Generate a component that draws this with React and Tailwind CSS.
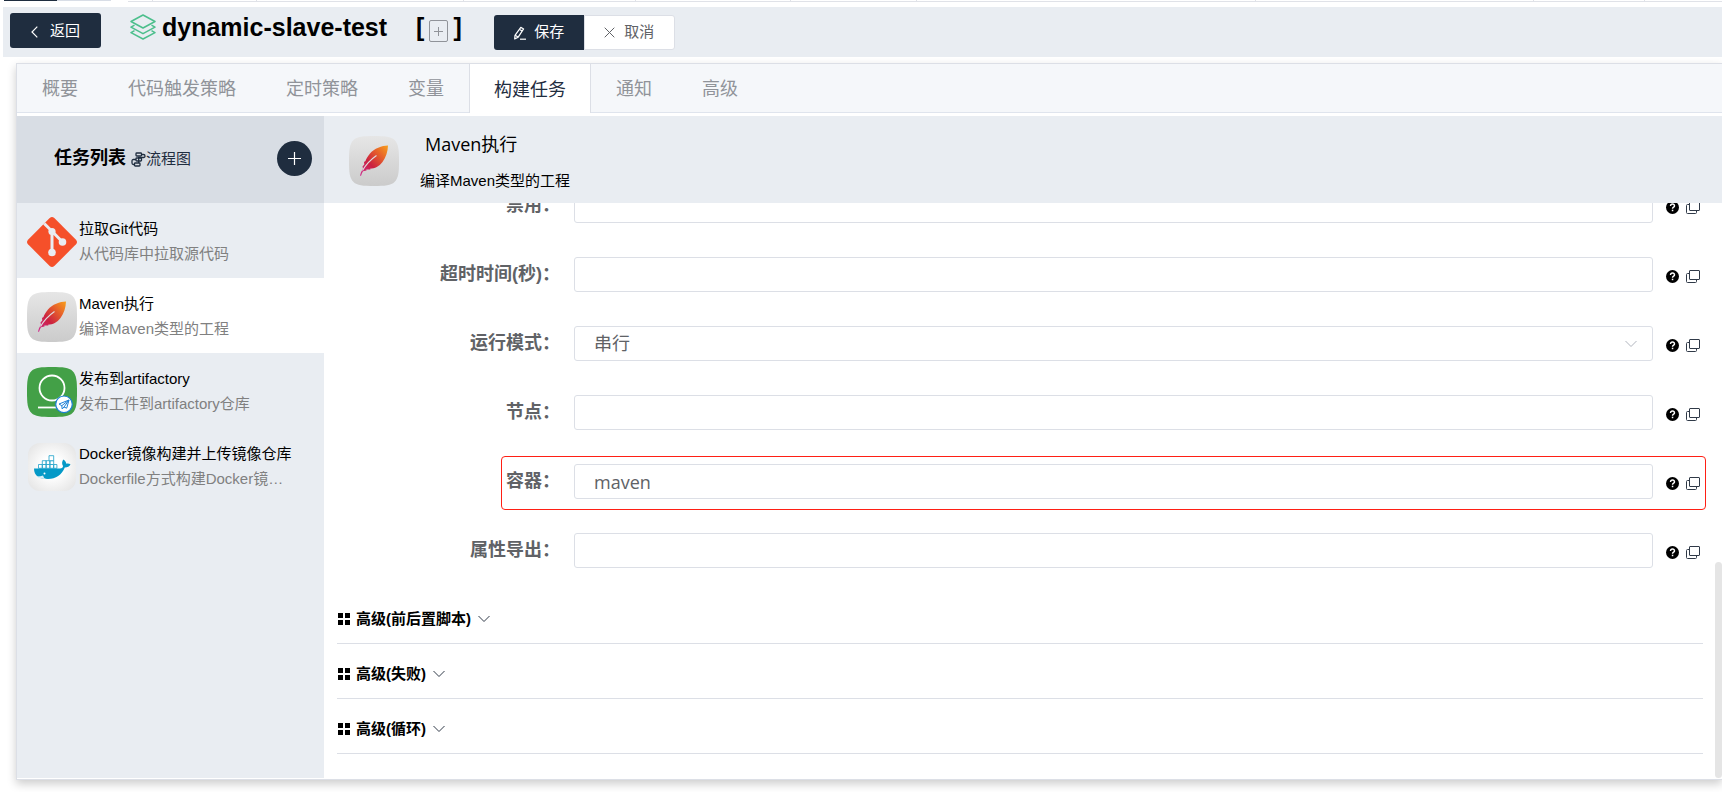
import React from "react";

const TABS = ["概要", "代码触发策略", "定时策略", "变量", "构建任务", "通知", "高级"];
const ACTIVE_TAB = "构建任务";

function LayersIcon() {
  return (
    <svg width="26" height="26" viewBox="0 0 26 26" fill="none" stroke="#4cbf8c" strokeWidth="1.5" strokeLinejoin="round" aria-hidden="true">
      <path d="M13 1 25 7.5 13 14 1 7.5Z" />
      <path d="M4.5 11.2 1 13.2 13 19.7 25 13.2 21.500 11.2" />
      <path d="M4.5 16.700 1 18.700 13 25 25 18.700 21.500 16.700" />
    </svg>
  );
}

function PencilIcon() {
  return (
    <svg width="14" height="14" viewBox="0 0 14 14" fill="none" stroke="currentColor" strokeWidth="1.200" strokeLinejoin="round" aria-hidden="true">
      <path d="M7.800 1.300 10.600 2.900 5.200 11.200 1.700 12.900 2 9.300Z" />
      <path d="M6.600 3.400 9.200 5M2.200 9.300 5 11" />
      <path d="M7 13.200H13" />
    </svg>
  );
}

function CloseIcon() {
  return (
    <svg width="11" height="11" viewBox="0 0 11 11" fill="none" stroke="currentColor" aria-hidden="true">
      <path d="M.7.7 10.300 10.300M10.300.7.7 10.300" />
    </svg>
  );
}

function ChevronDown({ className }) {
  return (
    <svg className={className} width="12" height="8" viewBox="0 0 12 8" fill="none" stroke="currentColor" aria-hidden="true">
      <path d="M.5 1 6 6.500 11.500 1" />
    </svg>
  );
}

function FlowIcon() {
  return (
    <svg width="15" height="15" viewBox="0 0 15 15" fill="none" stroke="currentColor" strokeWidth="1.300" aria-hidden="true">
      <rect x="5" y="1" width="5.500" height="3" rx=".8" />
      <rect x="5" y="6" width="5.500" height="3" rx=".8" />
      <rect x="3.500" y="11" width="5.500" height="3" rx=".8" />
      <path d="M10.500 2.500H12.500Q14 2.500 14 4T12.500 5.500H7.700V11M5 7.500H2.500Q1 7.500 1 9V11Q1 12.500 2.500 12.500H3.500" />
    </svg>
  );
}

function GitIcon() {
  return (
    <svg className="shrink-0" width="50" height="50" viewBox="0 0 50 50" aria-hidden="true">
      <path fill="#f5502a" d="M22.700 1Q25 -1 27.300 1L49 22.700Q51 25 49 27.300L27.300 49Q25 51 22.700 49L1 27.300Q-1 25 1 22.700Z" />
      <path d="M17.200 6.500 25 14.300V35M25 14.300 35.500 25" fill="none" stroke="#e9edf2" strokeWidth="3" />
      <circle cx="25" cy="14.500" r="3.600" fill="#e9edf2" />
      <circle cx="25" cy="35.500" r="3.800" fill="#e9edf2" />
      <circle cx="35.500" cy="25" r="3.800" fill="#e9edf2" />
    </svg>
  );
}

function MavenIcon({ id }) {
  return (
    <svg className="shrink-0" width="50" height="50" viewBox="0 0 50 50" aria-hidden="true">
      <defs>
        <linearGradient id={id + "-tile"} x1="0" y1="0" x2="0" y2="1">
          <stop offset="0" stopColor="#e6e6e6" />
          <stop offset="1" stopColor="#cbcbcb" />
        </linearGradient>
        <linearGradient id={id + "-leaf"} x1="1" y1="0" x2="0" y2="1">
          <stop offset="0" stopColor="#f8a01b" />
          <stop offset=".3" stopColor="#e6602a" />
          <stop offset=".62" stopColor="#cb2140" />
          <stop offset="1" stopColor="#cf2c92" />
        </linearGradient>
      </defs>
      <path
        fill={"url(#" + id + "-tile)"}
        d="M25 0C36 0 42 .5 45.500 4 49.500 8 50 14 50 25S49.500 42 45.500 46C42 49.500 36 50 25 50S8 49.500 4.500 46C.5 42 0 36 0 25S.5 8 4.500 4C8 .5 14 0 25 0Z"
      />
      <path
        fill={"url(#" + id + "-leaf)"}
        d="M39 9.500C33 9.500 25 12.500 21 17.500 18.500 20.500 17 23 16.500 25L15 26 15.300 28.500 13.500 30.500 14 32.500C12.500 35 11.300 37.500 11 40L12.200 39.500C12.600 38 13.200 36.500 14 35.200L17.500 34.500 17.300 33.600 21.500 33.400 21 32.700C26 32.500 30 30.500 33.500 26 37 21 38.800 15.500 39 9.500Z"
      />
      <path d="M27.500 19.500C22.500 23 17 28.500 13.500 34.500" fill="none" stroke="#dedede" strokeWidth="1.100" />
    </svg>
  );
}

function ArtifactoryIcon() {
  return (
    <svg className="shrink-0" width="50" height="50" viewBox="0 0 50 50" aria-hidden="true">
      <path fill="#43a047" d="M25 0C36 0 42 .5 45.500 4 49.500 8 50 14 50 25S49.500 42 45.500 46C42 49.500 36 50 25 50S8 49.500 4.500 46C.5 42 0 36 0 25S.5 8 4.500 4C8 .5 14 0 25 0Z" />
      <circle cx="25" cy="21" r="12.500" fill="none" stroke="#fff" strokeWidth="1.800" />
      <path d="M11 40.500H30" stroke="#fff" strokeWidth="1.800" />
      <circle cx="37" cy="37.300" r="8.300" fill="#fff" stroke="#1b7fd6" strokeWidth="1.200" />
      <path d="M42 33 32 37 34.800 38.700 35.200 42 37 40 39.700 41.200ZM42 33 34.800 38.700M42 33 37 40" fill="none" stroke="#1b7fd6" strokeWidth="1" strokeLinejoin="round" />
    </svg>
  );
}

function DockerIcon() {
  return (
    <svg className="shrink-0" width="50" height="50" viewBox="0 0 50 50" aria-hidden="true">
      <defs>
        <radialGradient id="docker-tile" cx=".5" cy=".5" r=".68">
          <stop offset=".3" stopColor="#ffffff" />
          <stop offset="1" stopColor="#e2e2e2" />
        </radialGradient>
      </defs>
      <rect x="1" y="1" width="48" height="48" rx="12" fill="url(#docker-tile)" />
      <g fill="#fff" stroke="#1c9fc8" strokeWidth=".8">
        <path d="M11.500 22.500h3.800v3.800h-3.800zM15.300 22.500h3.800v3.800h-3.800zM19.100 22.500h3.800v3.800h-3.800zM22.900 22.500h3.800v3.800h-3.800zM26.700 22.500h3.200v3.800h-3.200z" />
        <path d="M15.300 18.700h3.800v3.800h-3.800zM19.100 18.700h3.800v3.800h-3.800zM22.900 18.700h3.800v3.800h-3.800z" />
        <path d="M22 13.700h4.700v5H22z" />
      </g>
      <path fill="#0499c7" d="M7 26.500H33C35 26.500 36 25.500 36 24 34.500 21.500 35 19 36.500 17.500 38.300 18.500 39 20.300 39.300 21.700 40.800 21.300 42.300 21.600 43.500 22.300 42.500 24.500 40.500 25.500 37.800 25.500 34.500 33 29 37 21 37 12 37 7 34 7 26.500Z" />
      <circle cx="17.500" cy="31.500" r="1" fill="#fff" />
      <path d="M9.500 34.500Q14 34.500 16 33.500 16.500 36 19 37 12.500 37 9.500 34.500Z" fill="#d7edf5" />
    </svg>
  );
}

const TASKS = [
  { name: "拉取Git代码", note: "从代码库中拉取源代码", icon: <GitIcon /> },
  { name: "Maven执行", note: "编译Maven类型的工程", icon: <MavenIcon id="task" />, active: true },
  { name: "发布到artifactory", note: "发布工件到artifactory仓库", icon: <ArtifactoryIcon /> },
  { name: "Docker镜像构建并上传镜像仓库", note: "Dockerfile方式构建Docker镜…", icon: <DockerIcon /> },
];

const FIELDS = [
  { id: "disabled", label: "禁用", value: "" },
  { id: "timeout", label: "超时时间(秒)", value: "" },
  { id: "mode", label: "运行模式", options: ["串行", "并行"] },
  { id: "node", label: "节点", value: "" },
  { id: "container", label: "容器", value: "maven", marked: true },
  { id: "exports", label: "属性导出", value: "" },
];

const SECTIONS = ["高级(前后置脚本)", "高级(失败)", "高级(循环)"];

function Field({ field }) {
  const box =
    "h-[35px] w-full rounded-[3px] border border-[#dcdfe6] bg-white pl-[19px] pr-8 text-[18px] text-[#606266] outline-none font-['Open_Sans','Noto_Sans_CJK_SC',sans-serif]";
  return (
    <div className="relative flex h-[35px] items-center">
      <label htmlFor={field.id} className="w-[237px] shrink-0 pr-[14px] text-right text-[18px] leading-[35px] font-bold text-[#606266]">
        {field.label}：
      </label>
      <div className="relative min-w-0 flex-1">
        {field.options ? (
          <>
            <select id={field.id} className={box + " block appearance-none"}>
              {field.options.map((o) => (
                <option key={o}>{o}</option>
              ))}
            </select>
            <ChevronDown className="pointer-events-none absolute top-[14px] right-[16px] text-[#b0b4bd]" />
          </>
        ) : (
          <input id={field.id} type="text" defaultValue={field.value} className={box + " block"} />
        )}
      </div>
      <div className="ml-[13px] flex w-[37px] items-center gap-[7px] pt-[4px]">
        <button type="button" aria-label="帮助">
          <svg className="block" width="13" height="13" viewBox="0 0 13 13" aria-hidden="true">
            <circle cx="6.500" cy="6.500" r="6.500" fill="#000" />
            <path d="M4.500 5Q4.600 3 6.500 3T8.500 4.900C8.500 6.200 6.500 6.200 6.500 7.800" fill="none" stroke="#fff" strokeWidth="1.400" />
            <rect x="5.800" y="8.700" width="1.500" height="1.500" fill="#fff" />
          </svg>
        </button>
        <button type="button" aria-label="复制">
          <svg className="block" width="14" height="13" viewBox="0 0 14 13" fill="none" stroke="#303a48" aria-hidden="true">
            <rect x="3.500" y=".5" width="10" height="9" rx=".5" />
            <path d="M3.500 3.500H1.500Q.5 3.500.5 4.500V11.500Q.5 12.500 1.500 12.500H9.500Q10.500 12.500 10.500 11.500V9.500" />
          </svg>
        </button>
      </div>
      {field.marked && (
        <div className="pointer-events-none absolute -top-2 -right-[3px] left-[164px] h-[54px] rounded-[4px] border border-[#ff1f14]" />
      )}
    </div>
  );
}

export default function App() {
  return (
    <div className="flex h-screen flex-col overflow-hidden bg-white pb-3 font-['Liberation_Sans','Noto_Sans_CJK_SC',sans-serif] text-[15px] text-black">
      <div className="flex h-[7px] shrink-0 items-start pl-1" aria-hidden="true">
        <div className="h-px w-[53px] bg-[#1f2d3f]" />
        <div className="h-px w-[54px] bg-[#d8dde6]" />
        <div className="ml-[17px] flex h-[2px] flex-1 divide-x divide-[#e0e2e8] border-b border-[#e0e2e8]">
          <i className="w-[25px]" />
          <i className="w-[104px]" />
          <i className="w-[207px]" />
          <i className="w-[172px]" />
          <i className="w-[155px]" />
          <i className="w-[126px]" />
          <i className="w-[339px]" />
          <i className="w-[278px]" />
          <i className="w-[111px]" />
          <i className="flex-1" />
        </div>
      </div>

      <header className="ml-[3px] flex h-[50px] shrink-0 items-start bg-[#e9edf2] pl-[7px]">
        <button type="button" className="mt-[6px] flex h-[35px] w-[91px] items-center justify-center gap-[12px] rounded-[3px] bg-[#1f2d3f] pt-[2px] text-white">
          <svg width="7" height="12" viewBox="0 0 7 12" fill="none" stroke="currentColor" strokeWidth="1.200" aria-hidden="true">
            <path d="M6.300.7 1 6 6.300 11.300" />
          </svg>
          返回
        </button>
        <div className="mt-[7px] ml-[29px] flex h-[26px] items-center">
          <LayersIcon />
          <h1 className="ml-[6px] text-[25px] leading-[26px] font-bold">dynamic-slave-test</h1>
          <div className="ml-[29px] flex items-center gap-[5px] text-[25px] leading-[26px] font-bold">
            <span>[</span>
            <button type="button" aria-label="添加标签" className="mt-[8px] flex h-[22px] w-[19px] items-center justify-center rounded-[2px] border border-[#909399] text-[#909399]">
              <svg width="9" height="9" viewBox="0 0 9 9" fill="none" stroke="currentColor" aria-hidden="true">
                <path d="M4.500 0V9M0 4.500H9" />
              </svg>
            </button>
            <span>]</span>
          </div>
        </div>
        <div className="mt-2 ml-[32px] flex">
          <button type="button" className="flex h-[35px] w-[90px] items-center justify-center gap-[7px] rounded-l-[3px] bg-[#1f2d3f] text-white">
            <PencilIcon />
            保存
          </button>
          <button type="button" className="flex h-[35px] w-[91px] items-center justify-center gap-[9px] rounded-r-[3px] border border-[#dcdfe6] bg-white text-[#606266]">
            <CloseIcon />
            取消
          </button>
        </div>
      </header>

      <main className="mt-[6px] ml-4 flex min-h-0 flex-1 flex-col border-y border-l border-[#dcdfe6] bg-white pb-px shadow-[0_4px_9px_rgba(0,0,0,0.2)]">
        <nav className="flex h-[49px] shrink-0 border-b border-[#dfe4ed] bg-[#f5f7fa]">
          {TABS.map((t) => (
            <button
              key={t}
              type="button"
              className={
                t === ACTIVE_TAB
                  ? "-mb-px border-x border-[#dcdfe6] bg-white px-6 pt-[3px] text-[18px] text-[#1f2d3f]"
                  : "px-[25px] pt-[3px] text-[18px] text-[#909399]"
              }
            >
              {t}
            </button>
          ))}
        </nav>

        <div className="mt-[3px] flex min-h-0 flex-1">
          <aside className="flex w-[307px] shrink-0 flex-col bg-[#e9edf2]">
            <div className="flex h-[87px] shrink-0 items-center bg-[#d8dde4] pr-3 pb-[2px] pl-[37px]">
              <h2 className="text-[18px] font-bold">任务列表</h2>
              <a href="#flow" className="ml-[5px] flex items-center pt-[2px] text-[15px] text-[#1f2d3f]">
                <FlowIcon />
                流程图
              </a>
              <button type="button" aria-label="添加任务" className="ml-auto flex size-[35px] items-center justify-center rounded-full bg-[#1f2d3f] text-white">
                <svg width="13" height="13" viewBox="0 0 13 13" fill="none" stroke="currentColor" strokeWidth="1.200" aria-hidden="true">
                  <path d="M6.500 0V13M0 6.500H13" />
                </svg>
              </button>
            </div>
            <ul>
              {TASKS.map((t) => (
                <li key={t.name} className={t.active ? "bg-white" : ""}>
                  <button type="button" className="flex h-[75px] w-full items-center gap-[2px] pt-[3px] pr-[30px] pl-[10px] text-left">
                    {t.icon}
                    <span className="block min-w-0 flex-1 pb-[3px] leading-[25px]">
                      <span className="block whitespace-nowrap">{t.name}</span>
                      <span className="block whitespace-nowrap text-[#808080]">{t.note}</span>
                    </span>
                  </button>
                </li>
              ))}
            </ul>
          </aside>

          <section className="flex min-w-0 flex-1 flex-col">
            <div className="flex h-[87px] shrink-0 items-center bg-[#e9edf2] pt-[2px] pl-[25px]">
              <MavenIcon id="header" />
              <div className="ml-[21px] flex flex-col gap-[12px] pt-[3px]">
                <h3 className="pl-[5px] text-[18px] leading-[26px] font-['Open_Sans','Noto_Sans_CJK_SC',sans-serif]">Maven执行</h3>
                <p className="text-[15px] leading-[24px]">编译Maven类型的工程</p>
              </div>
            </div>

            <div className="flex min-h-0 flex-1">
              <form className="flex min-w-0 flex-1 flex-col justify-end overflow-hidden pb-6 pl-[13px]" onSubmit={(e) => e.preventDefault()}>
                <div className="flex flex-col gap-[34px] pr-[12px]">
                  {FIELDS.map((f) => (
                    <Field key={f.id} field={f} />
                  ))}
                </div>
                <div className="mt-[21px] pr-[12px]">
                  {SECTIONS.map((s) => (
                    <button key={s} type="button" className="flex h-[55px] w-full items-center border-b border-[#dcdfe6] pt-[6px] text-left font-bold">
                      <svg className="mr-[6px]" width="13" height="12" viewBox="0 0 13 12" aria-hidden="true">
                        <path d="M1 0H6V5H1ZM8 0H13V5H8ZM1 7H6V12H1ZM8 7H13V12H8Z" />
                      </svg>
                      {s}
                      <ChevronDown className="ml-[7px] text-[#303a48]" />
                    </button>
                  ))}
                </div>
              </form>
              <div className="flex w-[7px] flex-col justify-end" aria-hidden="true">
                <div className="h-[216px] rounded-t-full rounded-b-full bg-[#e5e5e5]" />
              </div>
            </div>
          </section>
        </div>
      </main>
    </div>
  );
}
